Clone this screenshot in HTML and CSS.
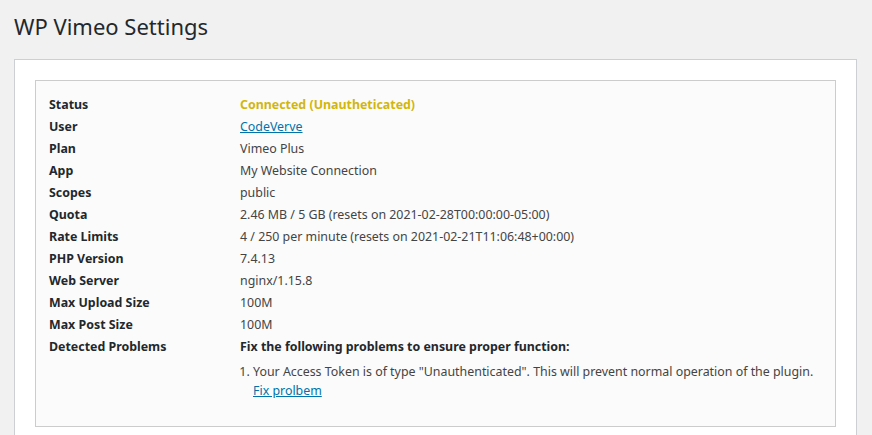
FILE: index.html
```html
<!DOCTYPE html>
<html lang="en">
<head>
<meta charset="utf-8">
<title>WP Vimeo Settings</title>
<link rel="stylesheet" href="styles.css">
</head>
<body>
<div class="wrap">
  <h1 class="page-title">WP Vimeo Settings</h1>
  <div class="panel">
    <div class="info-box">
      <table class="info-table">
        <tbody>
          <tr><th>Status</th><td class="status">Connected (Unautheticated)</td></tr>
          <tr><th>User</th><td><a href="#" class="link">CodeVerve</a></td></tr>
          <tr><th>Plan</th><td>Vimeo Plus</td></tr>
          <tr><th>App</th><td>My Website Connection</td></tr>
          <tr><th>Scopes</th><td>public</td></tr>
          <tr><th>Quota</th><td>2.46 MB / 5 GB (resets on 2021-02-28T00:00:00-05:00)</td></tr>
          <tr><th>Rate Limits</th><td>4 / 250 per minute (resets on 2021-02-21T11:06:48+00:00)</td></tr>
          <tr><th>PHP Version</th><td>7.4.13</td></tr>
          <tr><th>Web Server</th><td>nginx/1.15.8</td></tr>
          <tr><th>Max Upload Size</th><td>100M</td></tr>
          <tr><th>Max Post Size</th><td>100M</td></tr>
          <tr class="problems-row">
            <th>Detected Problems</th>
            <td>
              <p class="problems-title">Fix the following problems to ensure proper function:</p>
              <ol class="problems-list">
                <li>Your Access Token is of type "Unauthenticated". This will prevent normal operation of the plugin.<br><a href="#" class="link">Fix prolbem</a></li>
              </ol>
            </td>
          </tr>
        </tbody>
      </table>
    </div>
  </div>
</div>
</body>
</html>
```
FILE: styles.css
```css
html, body {
  margin: 0;
  padding: 0;
}
body {
  background: #f1f1f1;
  color: #444;
  font-family: "Noto Sans", "Open Sans", sans-serif;
  font-size: 12.4px;
}
.wrap {
  padding: 0 15px 0 14px;
}
.page-title {
  margin: 0;
  padding: 12px 0 18px;
  font-size: 22px;
  font-weight: 400;
  line-height: 29px;
  color: #23282d;
}
.panel {
  background: #fff;
  border: 1px solid #ccd0d4;
  padding: 20px 20px 20px 20px;
}
.info-box {
  background: #fbfbfb;
  border: 1px solid #ccc;
  padding: 13px 13px 26px;
}
.info-table {
  border-collapse: collapse;
  width: 100%;
}
.info-table th,
.info-table td {
  padding: 0;
  text-align: left;
  vertical-align: top;
  line-height: 22px;
}
.info-table th {
  width: 191px;
  font-weight: 700;
  color: #23282d;
}
.info-table td {
  color: #444;
}
.info-table td.status {
  color: #d2b60c;
  font-weight: 700;
}
.link {
  color: #0073aa;
  text-decoration: underline;
}
.problems-title {
  margin: 0;
  font-weight: 700;
  color: #23282d;
}
.problems-list {
  margin: 4px 0 0;
  padding: 0 0 0 13px;
}
.problems-list li {
  line-height: 19px;
}
```
